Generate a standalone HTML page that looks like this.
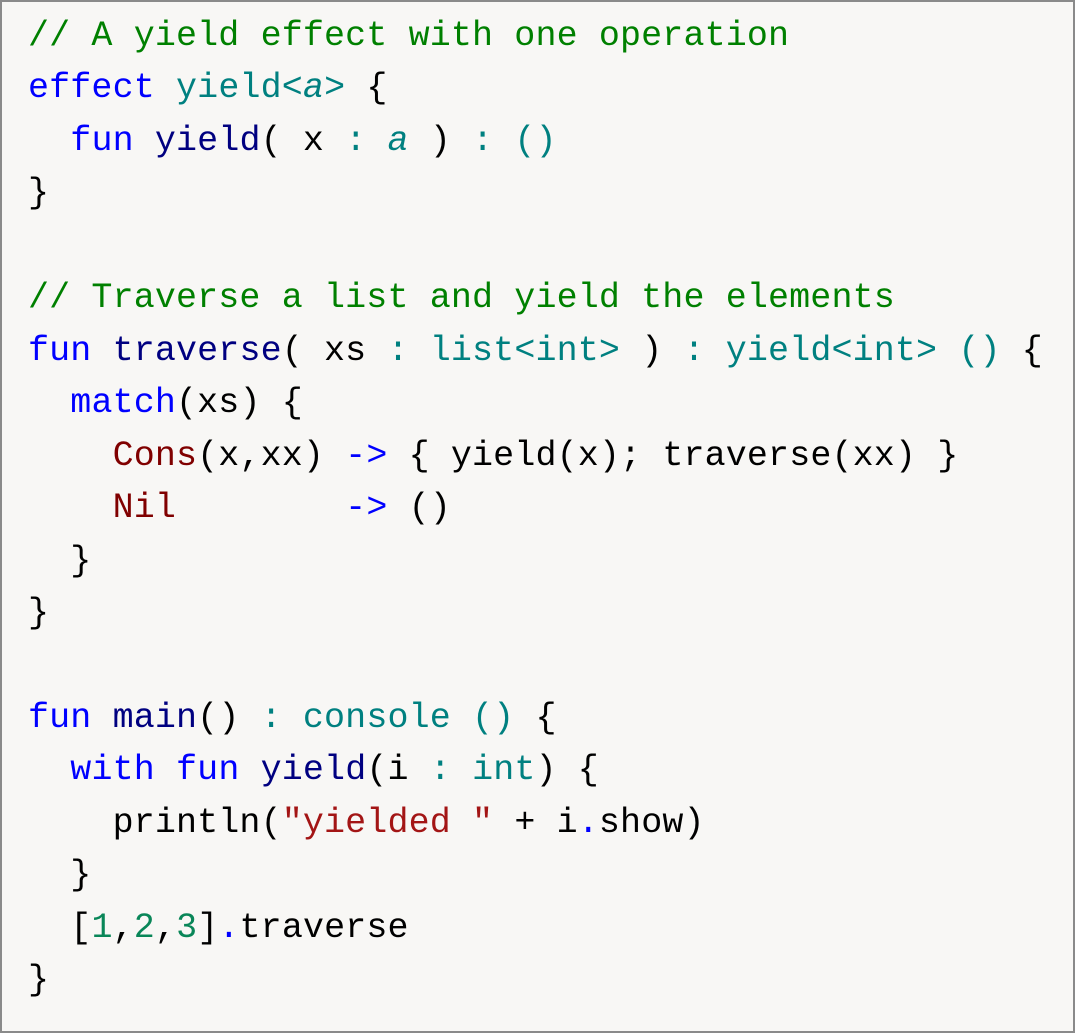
<!DOCTYPE html>
<html><head><style>
html,body{margin:0;padding:0;}
body{width:1075px;height:1033px;background:#fff;position:relative;overflow:hidden;}
.box{position:absolute;left:0;top:0;width:1071px;height:1029px;border:2px solid #8a8a8a;background:#f8f7f5;}
pre{margin:0;position:absolute;left:26px;top:8px;font-family:"Liberation Mono",monospace;font-size:35px;line-height:52.45px;letter-spacing:0.14px;color:#000;}
.c{color:#008000}.k{color:#0000ff}.f{color:#000080}.t{color:#008080}.m{color:#800000}.s{color:#a31515}.n{color:#098658}
i{font-style:italic}
</style></head><body><div class="box"><pre><span class="c">// A yield effect with one operation</span>
<span class="k">effect</span> <span class="t">yield&lt;<i>a</i>&gt;</span> {
  <span class="k">fun</span> <span class="f">yield</span>( x <span class="t">:</span> <span class="t"><i>a</i></span> ) <span class="t">: ()</span>
}

<span class="c">// Traverse a list and yield the elements</span>
<span class="k">fun</span> <span class="f">traverse</span>( xs <span class="t">: list&lt;int&gt;</span> ) <span class="t">: yield&lt;int&gt; ()</span> {
  <span class="k">match</span>(xs) {
    <span class="m">Cons</span>(x,xx) <span class="k">-&gt;</span> { yield(x); traverse(xx) }
    <span class="m">Nil</span>        <span class="k">-&gt;</span> ()
  }
}

<span class="k">fun</span> <span class="f">main</span>() <span class="t">: console ()</span> {
  <span class="k">with</span> <span class="k">fun</span> <span class="f">yield</span>(i <span class="t">: int</span>) {
    println(<span class="s">"yielded "</span> + i<span class="k">.</span>show)
  }
  [<span class="n">1</span>,<span class="n">2</span>,<span class="n">3</span>]<span class="k">.</span>traverse
}</pre></div></body></html>
